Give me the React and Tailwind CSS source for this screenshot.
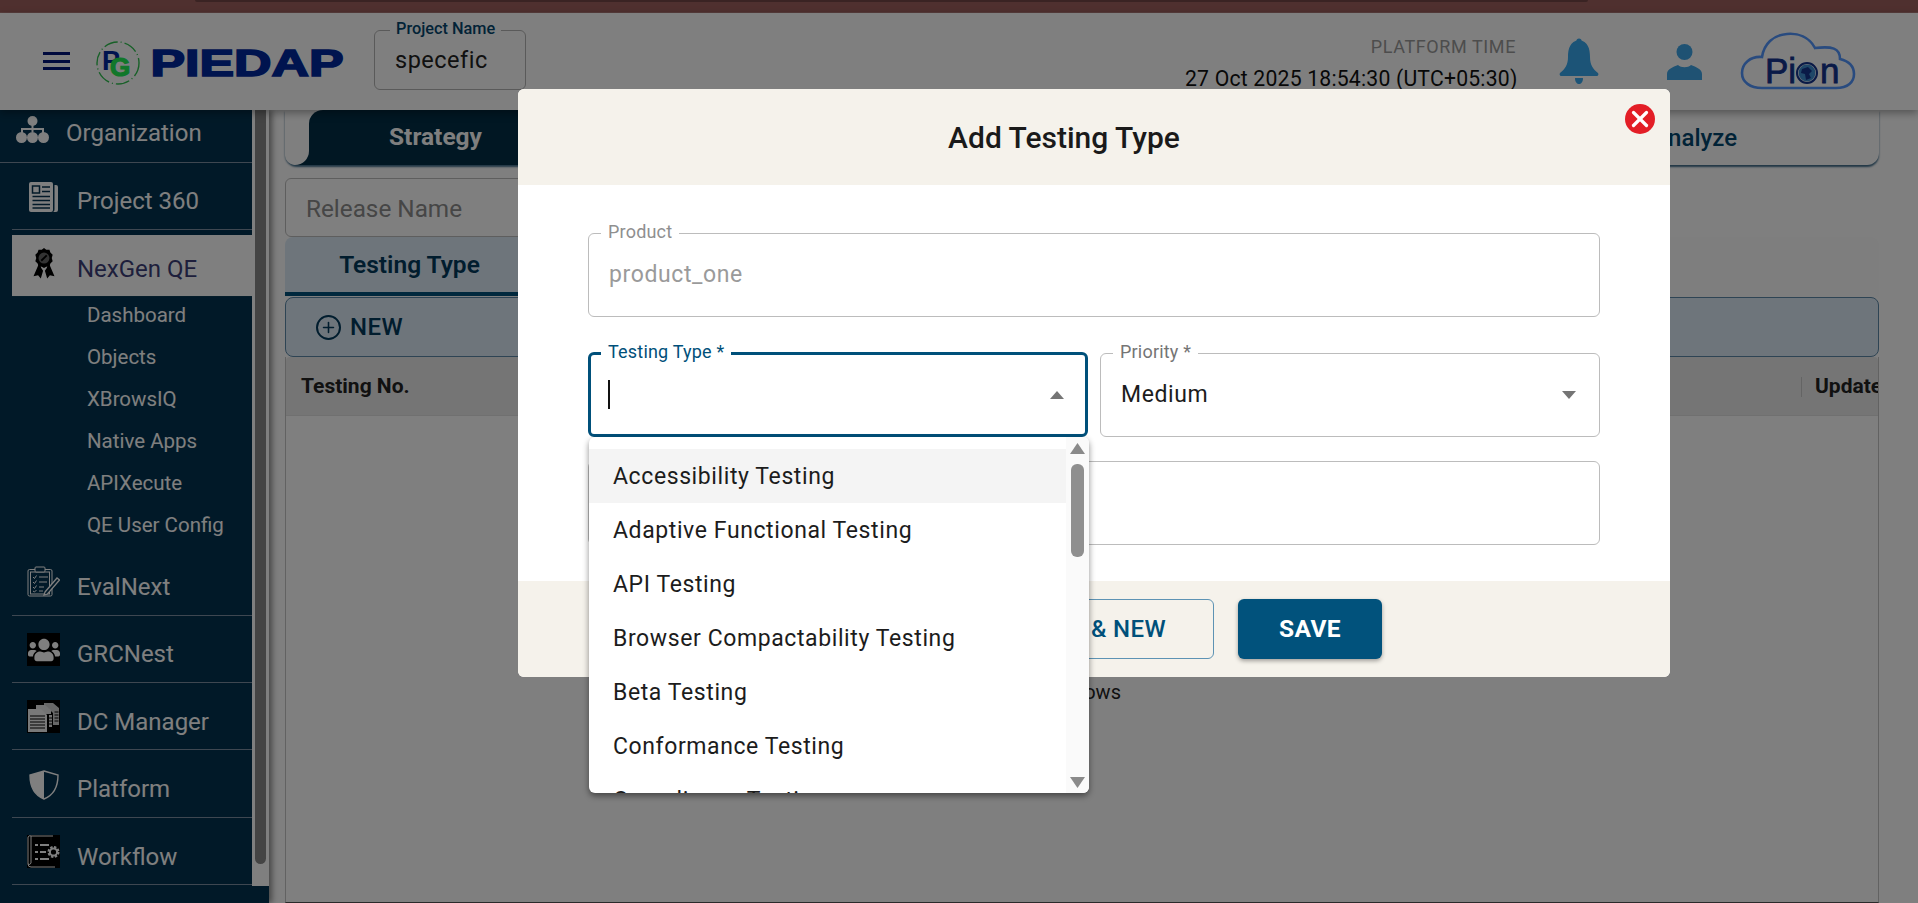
import React from "react";
import { Plus, X } from "lucide-react";
import { FaUsers } from "react-icons/fa";

const font = { fontFamily: "Roboto, 'Liberation Sans', sans-serif" };

function OrgIcon() {
  return (
    <svg width="33" height="27" viewBox="0 0 33 27" fill="#fff">
      <circle cx="16.5" cy="5" r="5" />
      <rect x="15.5" y="8" width="2" height="8" />
      <rect x="5" y="12" width="23" height="2" />
      <rect x="5" y="12" width="2" height="6" />
      <rect x="26" y="12" width="2" height="6" />
      <circle cx="5.5" cy="21.5" r="5.5" />
      <circle cx="16.5" cy="21.5" r="5.5" />
      <circle cx="27.5" cy="21.5" r="5.5" />
    </svg>
  );
}

function NewsIcon() {
  return (
    <svg width="29" height="30" viewBox="0 0 29 30">
      <rect x="0" y="0" width="24" height="30" rx="2" fill="#fff" />
      <path d="M25.5 3 h1.5 a2 2 0 0 1 2 2 v23 a2 2 0 0 1 -2 2 h-3 c1.2 -0.5 1.5 -1.5 1.5 -3 Z" fill="#fff" />
      <rect x="3.5" y="4" width="7" height="7" fill="none" stroke="#043350" strokeWidth="1.5" />
      <path d="M13 5 h8 M13 9.5 h8 M3.5 14.5 h17.5 M3.5 18.5 h17.5 M3.5 22.5 h17.5 M3.5 26 h17.5" stroke="#043350" strokeWidth="1.6" />
    </svg>
  );
}

function AwardIcon() {
  return (
    <svg width="22" height="31" viewBox="0 0 24 34">
      <path d="M7 16 L0.5 31 L5.5 30 L8.5 33.5 L11 25 L9 22 Z M17 16 L23.5 31 L18.5 30 L15.5 33.5 L13 25 L15 22 Z" fill="#000" />
      <path d="M12 0 L14.5 2 L18 2 L19 5 L21.5 7.5 L20.5 11 L21.5 14.5 L19 17 L18 20 L14.5 20.5 L12 22 L9.5 20.5 L6 20 L5 17 L2.5 14.5 L3.5 11 L2.5 7.5 L5 5 L6 2 L9.5 2 Z" fill="#000" />
      <circle cx="12" cy="11" r="6" fill="#666" />
      <path d="M9 14 L15 8" stroke="#000" strokeWidth="2" />
    </svg>
  );
}

function ClipboardIcon() {
  return (
    <svg width="33" height="31" viewBox="0 0 33 31" fill="none" stroke="#fff" strokeWidth="1">
      <rect x="1" y="3.5" width="24" height="26.5" rx="1.5" />
      <rect x="3.5" y="6" width="19" height="22" />
      <rect x="8" y="1" width="10" height="5" rx="1" fill="#043350" />
      <path d="M6 11 l1.5 1.5 l2 -3 M6 16 l1.5 1.5 l2 -3 M6 21 l1.5 1.5 l2 -3 M6 25 l1.5 1 l2 -2" />
      <path d="M12 11 h9 M12 16 h8 M12 21 h5 M12 25 h4" />
      <path d="M18 26 l12 -14 l2.5 2 l-12 14 l-3.5 1 Z" fill="#043350" strokeWidth="1.3" />
    </svg>
  );
}

function DocsIcon() {
  return (
    <svg width="33" height="33" viewBox="0 0 33 33" className="bg-black">
      <path d="M17 3 h9 l6 5 v17 h-6 v-12 l-5 -5 h-4 Z" fill="#cfcfcf" />
      <path d="M9 5 h9 l6 5 v4 h-15 Z" fill="#e6e6e6" />
      <path d="M22 15 h3 v12 h-3 Z" fill="#e6e6e6" />
      <path d="M1 9 h13 l6 6 v17 h-19 Z" fill="#f2f2f2" />
      <path d="M3 16 h15 M3 19 h15 M3 22 h15 M3 25 h15 M3 28 h15" stroke="#000" strokeWidth="1.1" />
      <path d="M27.5 12 h4 M27.5 15 h4 M27.5 18 h4 M27.5 21 h4 M22 18 h3 M22 21 h3 M22 24 h3" stroke="#000" strokeWidth="1" />
    </svg>
  );
}

function ShieldIcon() {
  return (
    <svg width="30" height="30" viewBox="0 0 30 30">
      <path d="M15 1 L29 5 C29 16 25 25 15 29 C5 25 1 16 1 5 Z" fill="none" stroke="#fff" strokeWidth="1.4" />
      <path d="M15 1 L1 5 C1 16 5 25 15 29 Z" fill="#fff" />
    </svg>
  );
}

function WorkflowIcon() {
  return (
    <svg width="33" height="33" viewBox="0 0 33 33" className="bg-black">
      <path d="M4 1 h22 M1 3 a2 2 0 0 1 3 -2 v27 a2 2 0 0 1 -3 1 Z M1 29 a3 3 0 0 0 3 3 h24" fill="none" stroke="#fff" strokeWidth="1" />
      <path d="M8 10 h3 M13 10 h9 M8 17 h3 M13 17 h6 M8 24 h3 M13 24 h9" stroke="#fff" strokeWidth="2" />
      <circle cx="26.5" cy="17" r="4.6" fill="none" stroke="#fff" strokeWidth="2.8" strokeDasharray="2.2 1.4" />
      <circle cx="26.5" cy="17" r="3.6" fill="none" stroke="#fff" strokeWidth="2" />
    </svg>
  );
}

function PgLogo() {
  return (
    <svg width="46" height="44" viewBox="0 0 46 44">
      <circle cx="23" cy="22" r="21" fill="none" stroke="#30c050" strokeWidth="1.4" strokeDasharray="14 3 1 3" />
      <text x="7" y="29" fontFamily="Liberation Sans" fontWeight="700" fontSize="27" fill="#00289e">P</text>
      <text x="15" y="35" fontFamily="Liberation Sans" fontWeight="700" fontSize="26" fill="#22ee55" stroke="#22ee55" strokeWidth="1.2">G</text>
    </svg>
  );
}

function PiedapWord() {
  return (
    <svg width="195" height="30" viewBox="0 0 195 30">
      <text x="0.5" y="28" fontFamily="Liberation Sans" fontWeight="700" fontSize="37" textLength="193" lengthAdjust="spacingAndGlyphs" fill="#00289e" stroke="#00289e" strokeWidth="1.6">PIEDAP</text>
    </svg>
  );
}

function PionLogo() {
  return (
    <svg width="116" height="58" viewBox="0 0 116 58">
      <path d="M22 56 H96 C108 56 114 50 114 42 C114 34 108 29 100 27 C100 16 92 14 75 16 C69 5 58 1 47 2 C33 3 24 12 22 25 C10 24 2 32 2 41 C2 50 10 56 22 56 Z" fill="none" stroke="#5296ff" strokeWidth="2.6" />
      <text x="25" y="51" fontFamily="Liberation Sans" fontSize="35" fill="#14348f" stroke="#14348f" strokeWidth="0.8">Pi</text>
      <text x="80" y="51" fontFamily="Liberation Sans" fontSize="35" fill="#14348f" stroke="#14348f" strokeWidth="0.8">n</text>
      <circle cx="67" cy="41" r="10" fill="none" stroke="#14348f" strokeWidth="2" />
      <circle cx="67" cy="41" r="8.4" fill="#3f8fd0" />
      <path d="M62 37 l6 -2 l4 4 l-3 3 l2 4 l-5 2 l-1 -6 l-4 -1 Z" fill="#14348f" />
    </svg>
  );
}

function BellIcon() {
  return (
    <svg width="40" height="46" viewBox="0 0 40 46" fill="#38a8ee">
      <circle cx="20" cy="3" r="2.6" />
      <path d="M20 2 C29 3 31 11 31 19 C31 27 34 31 39 35 C40 36 39 38 38 38 H2 C1 38 0 36 1 35 C6 31 9 27 9 19 C9 11 11 3 20 2 Z" />
      <path d="M16 40 H24 C24 44 22 46 20 46 C18 46 16 44 16 40 Z" />
    </svg>
  );
}

function PersonIcon() {
  return (
    <svg width="35" height="36" viewBox="0 0 35 36" fill="#3ea4e6">
      <circle cx="17.5" cy="8" r="8" />
      <path d="M0 36 V30 C0 25 6 23 11 21 C14 24 21 24 24 21 C29 23 35 25 35 30 V36 Z" />
    </svg>
  );
}

function Caret({ up, color = "#757575", w = 14, h = 8 }) {
  return (
    <svg width={w} height={h} viewBox="0 0 14 8" fill={color} preserveAspectRatio="none">
      <path d={up ? "M0 8 L7 0 L14 8 Z" : "M0 0 L7 8 L14 0 Z"} />
    </svg>
  );
}

function Sidebar() {
  const subs = ["Dashboard", "Objects", "XBrowsIQ", "Native Apps", "APIXecute", "QE User Config"];
  return (
    <aside className="w-[269px] h-full flex flex-col bg-[#033350] shrink-0 relative z-[1] shadow-[3px_0_6px_rgba(0,0,0,0.45)]">
      <div className="flex h-[776px]">
        <nav className="w-[252px] overflow-hidden text-white text-[24px]">
          <div className="h-[53px] flex pl-[16px] pt-[6px] gap-[17px] border-b border-[#7d8ea3]">
            <OrgIcon />
            <span className="mt-[4px] leading-[26px]">Organization</span>
          </div>
          <div className="h-[67px] ml-[12px] flex pl-[17px] pt-[19px] gap-[19px] border-b border-[#7d8ea3]">
            <NewsIcon />
            <span className="mt-[6px] leading-[26px]">Project 360</span>
          </div>
          <div className="h-[62px] ml-[12px] mt-[5px] flex pl-[21px] pt-[13px] gap-[22px] bg-white text-[#3c3f78] border-b border-[#0a3a55]">
            <AwardIcon />
            <span className="mt-[8px] leading-[26px]">NexGen QE</span>
          </div>
          <div className="-mt-[3px] pl-[87px] text-[20.5px]">
            {subs.map((s) => (
              <div key={s} className="h-[42px] leading-[42px]">{s}</div>
            ))}
          </div>
          <div className="h-[70px] ml-[12px] flex pl-[15px] pt-[20px] gap-[17px] border-b border-[#7d8ea3]">
            <ClipboardIcon />
            <span className="mt-[8px] leading-[26px]">EvalNext</span>
          </div>
          <div className="h-[67px] ml-[12px] flex pl-[15px] pt-[17px] gap-[17px] border-b border-[#7d8ea3]">
            <span className="w-[33px] h-[33px] bg-black flex items-center justify-center"><FaUsers size={32} /></span>
            <span className="mt-[8px] leading-[26px]">GRCNest</span>
          </div>
          <div className="h-[67px] ml-[12px] flex pl-[15px] pt-[17px] gap-[17px] border-b border-[#7d8ea3]">
            <DocsIcon />
            <span className="mt-[9px] leading-[26px]">DC Manager</span>
          </div>
          <div className="h-[68px] ml-[12px] flex pl-[17px] pt-[20px] gap-[18px] border-b border-[#7d8ea3]">
            <ShieldIcon />
            <span className="mt-[6px] leading-[26px]">Platform</span>
          </div>
          <div className="h-[67px] ml-[12px] flex pl-[15px] pt-[17px] gap-[17px] border-b border-[#7d8ea3]">
            <WorkflowIcon />
            <span className="mt-[9px] leading-[26px]">Workflow</span>
          </div>
        </nav>
        <div className="w-[17px] bg-white flex justify-center">
          <div className="w-[11px] h-[754px] bg-[#888888] rounded-b-[6px]" />
        </div>
      </div>
    </aside>
  );
}

function Main() {
  return (
    <main className="flex-1 min-w-0 h-full pl-[16px] pr-[39px] flex flex-col bg-white text-[#111]">
      <div className="h-[55px] shrink-0 flex justify-between bg-white rounded-b-[12px] shadow-[0_2px_2px_rgba(0,60,100,0.75)]">
        <div className="flex">
          <div className="relative z-[1] w-[24px] h-[55px] bg-white rounded-bl-[10px] rounded-br-[14px]" />
          <div className="relative w-[253px] h-[55px] bg-[#022e46] text-white rounded-tl-[14px] flex items-center justify-center text-[24.5px] font-bold">
            <div className="absolute -left-[14px] bottom-0 w-[14px] h-[14px] bg-[#022e46]" />
            Strategy
          </div>
        </div>
        <div className="mr-[142px] flex items-center text-[24px] font-medium text-[#03466e]">Analyze</div>
      </div>
      <div className="mt-[13px] w-[640px] h-[59px] shrink-0 border border-[#bdbdbd] rounded-[6px] flex items-center pl-[20px] pt-[3px] text-[24.3px] text-[#8c8c8c]">
        Release Name
      </div>
      <div className="h-[60px] shrink-0 rounded-t-[8px] bg-[#fdfdfd]">
        <div className="w-[249px] h-[59px] pt-[1px] bg-[#dcebf7] rounded-t-[8px] border-b-[4px] border-[#00507a] flex items-center justify-center text-[24.5px] font-semibold text-[#033a5c]">
          Testing Type
        </div>
      </div>
      <div className="h-[60px] shrink-0 bg-[#dcebf7] border border-[#5d88a8] rounded-[8px] flex items-center pl-[30px] gap-[9px] text-[#033a5c]">
        <span className="w-[25px] h-[25px] rounded-full border-[2.5px] border-[#033a5c] flex items-center justify-center">
          <Plus size={17} strokeWidth={2.2} />
        </span>
        <span className="text-[24px] font-medium tracking-[0.4px]">NEW</span>
      </div>
      <div className="flex-1 flex flex-col border-x border-b border-[#c4c4c4] border-b-[#555]">
        <div className="h-[59px] shrink-0 bg-[#ebebeb] border-b border-[#e0e0e0] rounded-t-[4px] flex items-center justify-between pl-[15px] pt-[1px] text-[21px] font-bold text-[#222]">
          <span>Testing No.</span>
          <span className="flex items-center w-[77px] overflow-hidden whitespace-nowrap">
            <span className="w-[1px] h-[20px] bg-[#c8c8c8] mr-[13px] shrink-0" />
            Update
          </span>
        </div>
        <div className="pt-[264px] pl-[4px] text-center text-[20px] leading-[24px] text-[#222]">No rows</div>
      </div>
    </main>
  );
}

function Header() {
  return (
    <header className="h-[97px] shrink-0 bg-white flex relative z-10 shadow-[0_3px_8px_rgba(0,0,0,0.35)]">
      <div className="pl-[43px] pt-[39px] w-[95px]">
        <div className="w-[27px] h-[18px] flex flex-col justify-between">
          <span className="h-[3px] bg-[#00147a]" />
          <span className="h-[3px] bg-[#00147a]" />
          <span className="h-[3px] bg-[#00147a]" />
        </div>
      </div>
      <div className="pt-[28px]"><PgLogo /></div>
      <div className="pt-[35px] ml-[9px]"><PiedapWord /></div>
      <div className="relative ml-[29px] mt-[17px] w-[152px] h-[60px] border border-[#b5b5b5] rounded-[6px] flex items-center pl-[20px] pt-[2px] text-[23.5px] tracking-[0.5px] text-[#222]">
        <span className="absolute -top-[13px] left-[15px] px-[6px] bg-white text-[16.3px] leading-[22px] tracking-normal font-medium text-[#05466e] whitespace-nowrap">Project Name</span>
        specefic
      </div>
      <div className="ml-[659px] w-[331px] text-right whitespace-nowrap pt-[21px]">
        <div className="text-[18px] leading-[26px] text-[#9a9a9a] tracking-[0.6px]">PLATFORM TIME</div>
        <div className="mt-[6px] text-[21.2px] leading-[26px] text-[#111] tracking-[0.2px]">27 Oct 2025 18:54:30 (UTC+05:30)</div>
      </div>
      <div className="ml-[43px] pt-[25px]"><BellIcon /></div>
      <div className="ml-[68px] pt-[31px]"><PersonIcon /></div>
      <div className="ml-[38px] pt-[19px]"><PionLogo /></div>
    </header>
  );
}

function Field({ label, className, labelClass, children }) {
  return (
    <div className={`relative rounded-[6px] flex items-center pl-[20px] text-[23px] tracking-[0.6px] ${className}`}>
      <span className={`absolute px-[7px] bg-white text-[18px] leading-[22px] tracking-[0.2px] whitespace-nowrap ${labelClass}`}>{label}</span>
      {children}
    </div>
  );
}

function Dropdown() {
  const options = ["Accessibility Testing", "Adaptive Functional Testing", "API Testing", "Browser Compactability Testing", "Beta Testing", "Conformance Testing", "Compliance Testing"];
  return (
    <div className="absolute left-[71px] top-[348px] w-[500px] h-[356px] bg-white rounded-[6px] overflow-hidden flex shadow-[0_3px_6px_rgba(0,0,0,0.45)] z-20">
      <ul className="flex-1 pt-[12px] text-[23px] tracking-[0.6px] text-[#1c1c1c]">
        {options.map((o, i) => (
          <li key={o} className={`h-[54px] pt-[1px] leading-[54px] pl-[24px] whitespace-nowrap ${i === 0 ? "bg-[#f4f4f4]" : ""}`}>{o}</li>
        ))}
      </ul>
      <div className="w-[23px] h-full bg-[#fafafa] flex flex-col items-center pt-[6px]">
        <Caret up color="#8a8a8a" w={15} h={11} />
        <div className="mt-[10px] w-[13px] h-[93px] rounded-[6px] bg-[#8f8f8f]" />
        <div className="mt-[220px]"><Caret color="#8a8a8a" w={15} h={11} /></div>
      </div>
    </div>
  );
}

function Modal() {
  return (
    <div className="absolute left-[518px] top-[89px] w-[1152px] h-[588px] bg-white rounded-[6px] flex flex-col z-20 text-[#1c1c1c]">
      <div className="relative h-[96px] shrink-0 bg-[#f5f2eb] rounded-t-[6px] flex items-center justify-center text-[30px] font-medium text-[#1a1a1a] pr-[60px]">
        Add Testing Type
        <button className="absolute right-[15px] top-[15px] w-[30px] h-[30px] rounded-full bg-[#e31e26] flex items-center justify-center text-white">
          <X size={26} strokeWidth={3} />
        </button>
      </div>
      <div className="flex-1 px-[70px] pt-[48px] flex flex-col">
        <Field label="Product" className="h-[84px] border border-[#bcbcbc] text-[#9a9a9a]" labelClass="-top-[13px] left-[12px] text-[#8f8f8f]">
          product_one
        </Field>
        <div className="mt-[36px] flex gap-[12px] items-start">
          <Field label="Testing Type *" className="w-[500px] h-[85px] -mt-[1px] border-[3px] border-[#00507a]" labelClass="text-[#00507a] -top-[14px] left-[10px]">
            <span className="w-[2px] h-[29px] bg-[#111] -ml-[3px]" />
            <span className="ml-auto mr-[21px]"><Caret up /></span>
          </Field>
          <Field label="Priority *" className="flex-1 h-[84px] border border-[#bcbcbc]" labelClass="-top-[13px] left-[12px] text-[#757575]">
            Medium
            <span className="ml-auto mr-[23px]"><Caret /></span>
          </Field>
        </div>
        <div className="mt-[24px] h-[84px] border border-[#bcbcbc] rounded-[6px]" />
      </div>
      <div className="h-[96px] shrink-0 bg-[#f5f2eb] rounded-b-[6px] flex items-start justify-end pt-[18px] pr-[288px] gap-[24px]">
        <button className="h-[60px] w-[260px] border border-[#5d93b4] rounded-[6px] flex items-center justify-end pr-[47px] text-[24px] font-medium text-[#00507a] tracking-[0.4px] whitespace-nowrap">SAVE &amp; NEW</button>
        <button className="h-[60px] w-[144px] bg-[#01527c] rounded-[6px] text-[24.5px] font-bold text-white tracking-[0.4px] shadow-[0_2px_4px_rgba(0,0,0,0.35)]">SAVE</button>
      </div>
      <Dropdown />
    </div>
  );
}

export default function App() {
  return (
    <div className="relative w-[1918px] h-[903px] overflow-hidden flex flex-col bg-white" style={font}>
      <div className="h-[13px] shrink-0 bg-[#9f605e] border-b border-[#b07a78] pl-[195px]">
        <div className="w-[1393px] h-[2px] bg-[#744646] rounded-b-[4px]" />
      </div>
      <Header />
      <div className="flex-1 min-h-0 flex">
        <Sidebar />
        <Main />
      </div>
      <div className="absolute inset-0 bg-black/50 z-20">
        <Modal />
      </div>
    </div>
  );
}
